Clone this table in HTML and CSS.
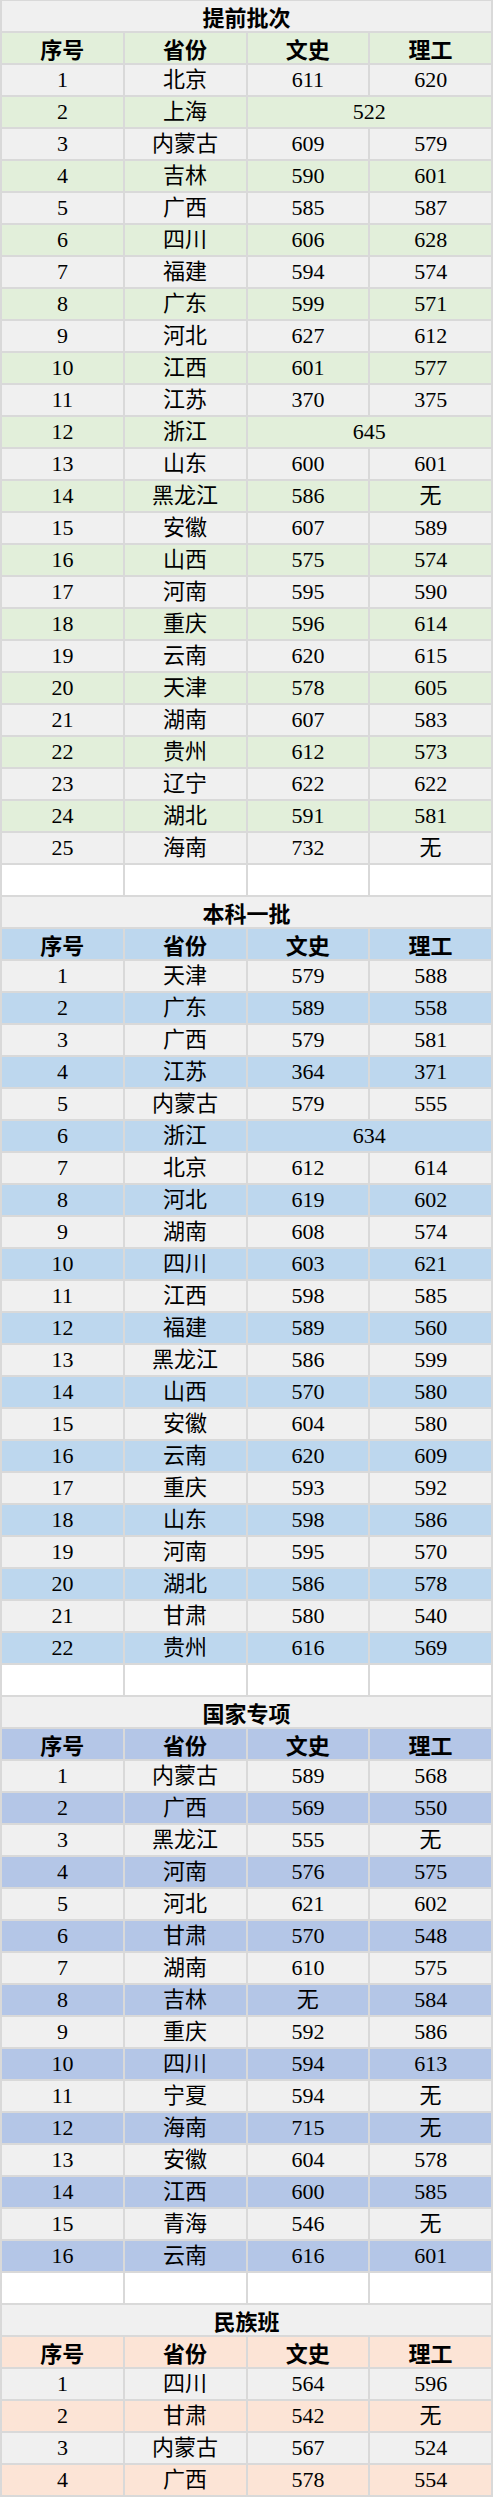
FILE: index.html
```html
<!DOCTYPE html>
<html lang="zh">
<head>
<meta charset="utf-8">
<title>分数线</title>
<link rel="stylesheet" href="styles.css">
</head>
<body>
<table class="sheet">
<colgroup><col><col><col><col></colgroup>
<tbody class="s1">
<tr class="title"><td colspan="4">提前批次</td></tr>
<tr class="head alt"><td>序号</td><td>省份</td><td>文史</td><td>理工</td></tr>
<tr><td>1</td><td>北京</td><td>611</td><td>620</td></tr>
<tr class="alt"><td>2</td><td>上海</td><td colspan="2">522</td></tr>
<tr><td>3</td><td>内蒙古</td><td>609</td><td>579</td></tr>
<tr class="alt"><td>4</td><td>吉林</td><td>590</td><td>601</td></tr>
<tr><td>5</td><td>广西</td><td>585</td><td>587</td></tr>
<tr class="alt"><td>6</td><td>四川</td><td>606</td><td>628</td></tr>
<tr><td>7</td><td>福建</td><td>594</td><td>574</td></tr>
<tr class="alt"><td>8</td><td>广东</td><td>599</td><td>571</td></tr>
<tr><td>9</td><td>河北</td><td>627</td><td>612</td></tr>
<tr class="alt"><td>10</td><td>江西</td><td>601</td><td>577</td></tr>
<tr><td>11</td><td>江苏</td><td>370</td><td>375</td></tr>
<tr class="alt"><td>12</td><td>浙江</td><td colspan="2">645</td></tr>
<tr><td>13</td><td>山东</td><td>600</td><td>601</td></tr>
<tr class="alt"><td>14</td><td>黑龙江</td><td>586</td><td>无</td></tr>
<tr><td>15</td><td>安徽</td><td>607</td><td>589</td></tr>
<tr class="alt"><td>16</td><td>山西</td><td>575</td><td>574</td></tr>
<tr><td>17</td><td>河南</td><td>595</td><td>590</td></tr>
<tr class="alt"><td>18</td><td>重庆</td><td>596</td><td>614</td></tr>
<tr><td>19</td><td>云南</td><td>620</td><td>615</td></tr>
<tr class="alt"><td>20</td><td>天津</td><td>578</td><td>605</td></tr>
<tr><td>21</td><td>湖南</td><td>607</td><td>583</td></tr>
<tr class="alt"><td>22</td><td>贵州</td><td>612</td><td>573</td></tr>
<tr><td>23</td><td>辽宁</td><td>622</td><td>622</td></tr>
<tr class="alt"><td>24</td><td>湖北</td><td>591</td><td>581</td></tr>
<tr><td>25</td><td>海南</td><td>732</td><td>无</td></tr>
<tr class="blank"><td></td><td></td><td></td><td></td></tr>
</tbody>
<tbody class="s2">
<tr class="title"><td colspan="4">本科一批</td></tr>
<tr class="head alt"><td>序号</td><td>省份</td><td>文史</td><td>理工</td></tr>
<tr><td>1</td><td>天津</td><td>579</td><td>588</td></tr>
<tr class="alt"><td>2</td><td>广东</td><td>589</td><td>558</td></tr>
<tr><td>3</td><td>广西</td><td>579</td><td>581</td></tr>
<tr class="alt"><td>4</td><td>江苏</td><td>364</td><td>371</td></tr>
<tr><td>5</td><td>内蒙古</td><td>579</td><td>555</td></tr>
<tr class="alt"><td>6</td><td>浙江</td><td colspan="2">634</td></tr>
<tr><td>7</td><td>北京</td><td>612</td><td>614</td></tr>
<tr class="alt"><td>8</td><td>河北</td><td>619</td><td>602</td></tr>
<tr><td>9</td><td>湖南</td><td>608</td><td>574</td></tr>
<tr class="alt"><td>10</td><td>四川</td><td>603</td><td>621</td></tr>
<tr><td>11</td><td>江西</td><td>598</td><td>585</td></tr>
<tr class="alt"><td>12</td><td>福建</td><td>589</td><td>560</td></tr>
<tr><td>13</td><td>黑龙江</td><td>586</td><td>599</td></tr>
<tr class="alt"><td>14</td><td>山西</td><td>570</td><td>580</td></tr>
<tr><td>15</td><td>安徽</td><td>604</td><td>580</td></tr>
<tr class="alt"><td>16</td><td>云南</td><td>620</td><td>609</td></tr>
<tr><td>17</td><td>重庆</td><td>593</td><td>592</td></tr>
<tr class="alt"><td>18</td><td>山东</td><td>598</td><td>586</td></tr>
<tr><td>19</td><td>河南</td><td>595</td><td>570</td></tr>
<tr class="alt"><td>20</td><td>湖北</td><td>586</td><td>578</td></tr>
<tr><td>21</td><td>甘肃</td><td>580</td><td>540</td></tr>
<tr class="alt"><td>22</td><td>贵州</td><td>616</td><td>569</td></tr>
<tr class="blank"><td></td><td></td><td></td><td></td></tr>
</tbody>
<tbody class="s3">
<tr class="title"><td colspan="4">国家专项</td></tr>
<tr class="head alt"><td>序号</td><td>省份</td><td>文史</td><td>理工</td></tr>
<tr><td>1</td><td>内蒙古</td><td>589</td><td>568</td></tr>
<tr class="alt"><td>2</td><td>广西</td><td>569</td><td>550</td></tr>
<tr><td>3</td><td>黑龙江</td><td>555</td><td>无</td></tr>
<tr class="alt"><td>4</td><td>河南</td><td>576</td><td>575</td></tr>
<tr><td>5</td><td>河北</td><td>621</td><td>602</td></tr>
<tr class="alt"><td>6</td><td>甘肃</td><td>570</td><td>548</td></tr>
<tr><td>7</td><td>湖南</td><td>610</td><td>575</td></tr>
<tr class="alt"><td>8</td><td>吉林</td><td>无</td><td>584</td></tr>
<tr><td>9</td><td>重庆</td><td>592</td><td>586</td></tr>
<tr class="alt"><td>10</td><td>四川</td><td>594</td><td>613</td></tr>
<tr><td>11</td><td>宁夏</td><td>594</td><td>无</td></tr>
<tr class="alt"><td>12</td><td>海南</td><td>715</td><td>无</td></tr>
<tr><td>13</td><td>安徽</td><td>604</td><td>578</td></tr>
<tr class="alt"><td>14</td><td>江西</td><td>600</td><td>585</td></tr>
<tr><td>15</td><td>青海</td><td>546</td><td>无</td></tr>
<tr class="alt"><td>16</td><td>云南</td><td>616</td><td>601</td></tr>
<tr class="blank"><td></td><td></td><td></td><td></td></tr>
</tbody>
<tbody class="s4">
<tr class="title"><td colspan="4">民族班</td></tr>
<tr class="head alt"><td>序号</td><td>省份</td><td>文史</td><td>理工</td></tr>
<tr><td>1</td><td>四川</td><td>564</td><td>596</td></tr>
<tr class="alt"><td>2</td><td>甘肃</td><td>542</td><td>无</td></tr>
<tr><td>3</td><td>内蒙古</td><td>567</td><td>524</td></tr>
<tr class="alt"><td>4</td><td>广西</td><td>578</td><td>554</td></tr>
</tbody>
</table>
</body>
</html>
```
FILE: styles.css
```css
html, body {
  margin: 0;
  padding: 0;
  background: #ffffff;
}

.sheet {
  width: 493px;
  border-collapse: collapse;
  table-layout: fixed;
  font-family: "Liberation Serif", "Noto Sans CJK SC", serif;
  font-size: 22px;
  color: #000;
}

.sheet td {
  height: 30px;
  padding: 0;
  border: 2px solid #d9d9d9;
  text-align: center;
  vertical-align: middle;
  line-height: 30px;
  background: #f0f0f0;
  white-space: nowrap;
  overflow: hidden;
}

.sheet tr:first-child td {
  border-top-width: 1px;
}

.sheet .title td {
  font-weight: bold;
  font-family: "Noto Sans CJK SC", sans-serif;
}

.sheet .head td {
  font-weight: bold;
  font-family: "Noto Sans CJK SC", sans-serif;
}

.sheet .blank td {
  background: #ffffff;
}

.s1 .alt td { background: #e2efda; }
.s2 .alt td { background: #bdd7ee; }
.s3 .alt td { background: #b4c6e7; }
.s4 .alt td { background: #fce4d6; }
```
